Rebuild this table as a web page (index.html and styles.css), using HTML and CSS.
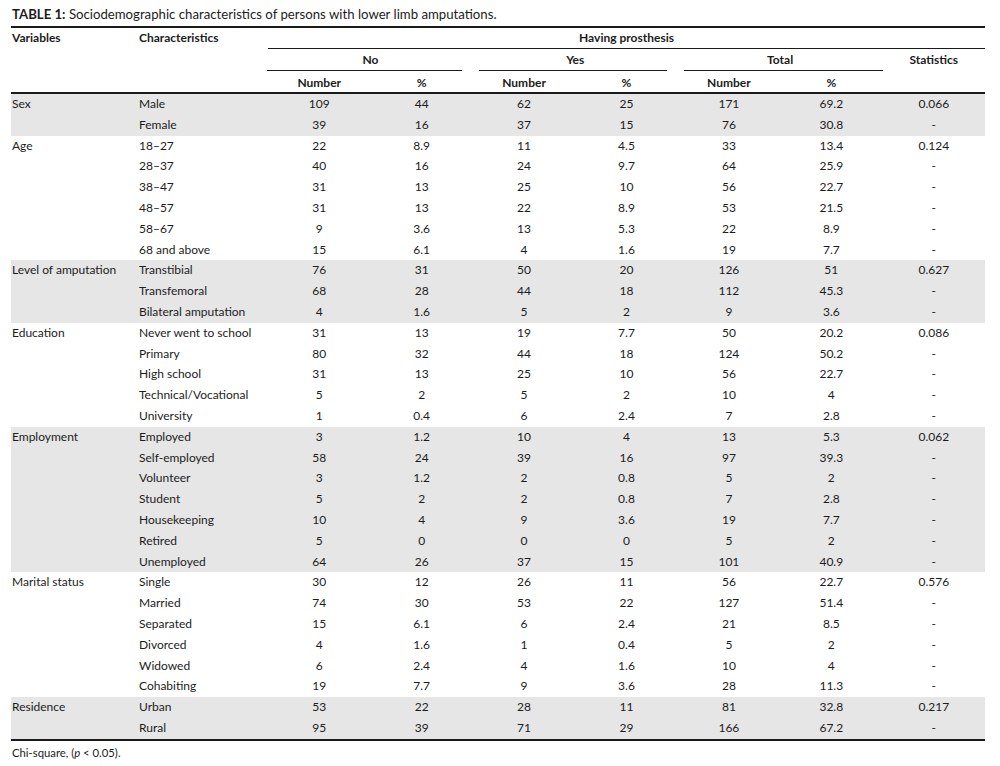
FILE: index.html
```html
<!DOCTYPE html>
<html lang="en">
<head>
<meta charset="utf-8">
<title>Table 1</title>
<link rel="stylesheet" href="styles.css">
</head>
<body>
<div class="page">
  <p class="caption"><b>TABLE 1:</b> Sociodemographic characteristics of persons with lower limb amputations.</p>
  <table class="data">
    <colgroup>
      <col class="c-var"><col class="c-char">
      <col class="c-num"><col class="c-num"><col class="c-num"><col class="c-num"><col class="c-num"><col class="c-num"><col class="c-num">
    </colgroup>
    <thead>
      <tr class="h1">
        <th class="left" rowspan="3">Variables</th>
        <th class="left" rowspan="3">Characteristics</th>
        <th class="span-line" colspan="7">Having prosthesis</th>
      </tr>
      <tr class="h2">
        <th class="grp g-no" colspan="2">No</th>
        <th class="grp g-yes" colspan="2">Yes</th>
        <th class="grp g-total" colspan="2">Total</th>
        <th class="stat" rowspan="2">Statistics</th>
      </tr>
      <tr class="h3">
        <th>Number</th><th>%</th>
        <th>Number</th><th>%</th>
        <th>Number</th><th>%</th>
      </tr>
    </thead>
    <tbody>
      <tr class="shade"><td class="left">Sex</td><td class="left">Male</td><td>109</td><td>44</td><td>62</td><td>25</td><td>171</td><td>69.2</td><td>0.066</td></tr>
      <tr class="shade"><td></td><td class="left">Female</td><td>39</td><td>16</td><td>37</td><td>15</td><td>76</td><td>30.8</td><td>-</td></tr>

      <tr><td class="left">Age</td><td class="left">18–27</td><td>22</td><td>8.9</td><td>11</td><td>4.5</td><td>33</td><td>13.4</td><td>0.124</td></tr>
      <tr><td></td><td class="left">28–37</td><td>40</td><td>16</td><td>24</td><td>9.7</td><td>64</td><td>25.9</td><td>-</td></tr>
      <tr><td></td><td class="left">38–47</td><td>31</td><td>13</td><td>25</td><td>10</td><td>56</td><td>22.7</td><td>-</td></tr>
      <tr><td></td><td class="left">48–57</td><td>31</td><td>13</td><td>22</td><td>8.9</td><td>53</td><td>21.5</td><td>-</td></tr>
      <tr><td></td><td class="left">58–67</td><td>9</td><td>3.6</td><td>13</td><td>5.3</td><td>22</td><td>8.9</td><td>-</td></tr>
      <tr><td></td><td class="left">68 and above</td><td>15</td><td>6.1</td><td>4</td><td>1.6</td><td>19</td><td>7.7</td><td>-</td></tr>

      <tr class="shade"><td class="left">Level of amputation</td><td class="left">Transtibial</td><td>76</td><td>31</td><td>50</td><td>20</td><td>126</td><td>51</td><td>0.627</td></tr>
      <tr class="shade"><td></td><td class="left">Transfemoral</td><td>68</td><td>28</td><td>44</td><td>18</td><td>112</td><td>45.3</td><td>-</td></tr>
      <tr class="shade"><td></td><td class="left">Bilateral amputation</td><td>4</td><td>1.6</td><td>5</td><td>2</td><td>9</td><td>3.6</td><td>-</td></tr>

      <tr><td class="left">Education</td><td class="left">Never went to school</td><td>31</td><td>13</td><td>19</td><td>7.7</td><td>50</td><td>20.2</td><td>0.086</td></tr>
      <tr><td></td><td class="left">Primary</td><td>80</td><td>32</td><td>44</td><td>18</td><td>124</td><td>50.2</td><td>-</td></tr>
      <tr><td></td><td class="left">High school</td><td>31</td><td>13</td><td>25</td><td>10</td><td>56</td><td>22.7</td><td>-</td></tr>
      <tr><td></td><td class="left">Technical/Vocational</td><td>5</td><td>2</td><td>5</td><td>2</td><td>10</td><td>4</td><td>-</td></tr>
      <tr><td></td><td class="left">University</td><td>1</td><td>0.4</td><td>6</td><td>2.4</td><td>7</td><td>2.8</td><td>-</td></tr>

      <tr class="shade"><td class="left">Employment</td><td class="left">Employed</td><td>3</td><td>1.2</td><td>10</td><td>4</td><td>13</td><td>5.3</td><td>0.062</td></tr>
      <tr class="shade"><td></td><td class="left">Self-employed</td><td>58</td><td>24</td><td>39</td><td>16</td><td>97</td><td>39.3</td><td>-</td></tr>
      <tr class="shade"><td></td><td class="left">Volunteer</td><td>3</td><td>1.2</td><td>2</td><td>0.8</td><td>5</td><td>2</td><td>-</td></tr>
      <tr class="shade"><td></td><td class="left">Student</td><td>5</td><td>2</td><td>2</td><td>0.8</td><td>7</td><td>2.8</td><td>-</td></tr>
      <tr class="shade"><td></td><td class="left">Housekeeping</td><td>10</td><td>4</td><td>9</td><td>3.6</td><td>19</td><td>7.7</td><td>-</td></tr>
      <tr class="shade"><td></td><td class="left">Retired</td><td>5</td><td>0</td><td>0</td><td>0</td><td>5</td><td>2</td><td>-</td></tr>
      <tr class="shade"><td></td><td class="left">Unemployed</td><td>64</td><td>26</td><td>37</td><td>15</td><td>101</td><td>40.9</td><td>-</td></tr>

      <tr><td class="left">Marital status</td><td class="left">Single</td><td>30</td><td>12</td><td>26</td><td>11</td><td>56</td><td>22.7</td><td>0.576</td></tr>
      <tr><td></td><td class="left">Married</td><td>74</td><td>30</td><td>53</td><td>22</td><td>127</td><td>51.4</td><td>-</td></tr>
      <tr><td></td><td class="left">Separated</td><td>15</td><td>6.1</td><td>6</td><td>2.4</td><td>21</td><td>8.5</td><td>-</td></tr>
      <tr><td></td><td class="left">Divorced</td><td>4</td><td>1.6</td><td>1</td><td>0.4</td><td>5</td><td>2</td><td>-</td></tr>
      <tr><td></td><td class="left">Widowed</td><td>6</td><td>2.4</td><td>4</td><td>1.6</td><td>10</td><td>4</td><td>-</td></tr>
      <tr><td></td><td class="left">Cohabiting</td><td>19</td><td>7.7</td><td>9</td><td>3.6</td><td>28</td><td>11.3</td><td>-</td></tr>

      <tr class="shade"><td class="left">Residence</td><td class="left">Urban</td><td>53</td><td>22</td><td>28</td><td>11</td><td>81</td><td>32.8</td><td>0.217</td></tr>
      <tr class="shade"><td></td><td class="left">Rural</td><td>95</td><td>39</td><td>71</td><td>29</td><td>166</td><td>67.2</td><td>-</td></tr>
    </tbody>
  </table>
  <p class="note">Chi-square, (<i>p</i> &lt; 0.05).</p>
</div>
</body>
</html>
```
FILE: styles.css
```css
* { box-sizing: border-box; }
html, body { margin: 0; padding: 0; background: #fff; }
body {
  font-family: Lato, "Open Sans", sans-serif;
  font-size: 12px;
  color: #1c1c1c;
}
.page {
  padding: 7px 15px 0 11px;
}
.caption {
  margin: 0;
  height: 19px;
  line-height: 14px;
  font-size: 13.2px;
  padding-left: 1px;
}
.caption b { font-weight: 700; }
.data {
  width: 974px;
  table-layout: fixed;
  border-collapse: separate;
  border-spacing: 0;
  border-top: 2px solid #1a1a1a;
  border-bottom: 2px solid #1a1a1a;
}
.c-var { width: 127px; }
.c-char { width: 130px; }
.data th, .data td {
  padding: 0;
  text-align: center;
  white-space: nowrap;
  font-weight: 400;
}
.data th { font-weight: 700; }
.data .left { text-align: left; padding-left: 1px; }
.h1 th { height: 20px; vertical-align: middle; line-height: 20px; }
.h1 th.left { vertical-align: top; }
.span-line { border-bottom: 1px solid #1a1a1a; }
.h2 th { height: 22px; vertical-align: top; line-height: 22px; }
.h2 th.grp { line-height: 21px; }
.grp::after {
  content: "";
  display: block;
  border-bottom: 1px solid #1a1a1a;
}
.g-no::after { margin: 0 11px 0 -1px; }
.g-yes::after { margin: 0 11px 0 6px; }
.g-total::after { margin: 0 0 0 6px; }
.stat { line-height: 22px; }
.h3 th {
  height: 23px;
  padding-top: 2px;
  line-height: 19px;
  vertical-align: top;
}
.data thead tr.h3 th, .data thead th.stat, .data thead th.left { border-bottom: 2px solid #1a1a1a; }
.data tbody tr { height: 20.8px; }
.data tbody td { line-height: 20.8px; vertical-align: middle; }
.shade td { background: #e6e6e6; }
.note {
  margin: 5px 0 0 1px;
  font-size: 11.3px;
}
```
